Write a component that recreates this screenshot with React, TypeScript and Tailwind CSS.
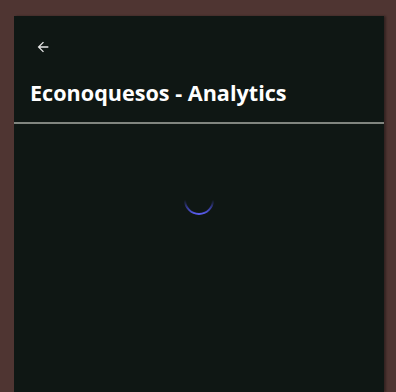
export default function App() {
    return (
        <div className="min-h-[392px] bg-[#4f3532] pl-[14px] pt-[16px]" style={{ fontFamily: "'Open Sans', 'Noto Sans', sans-serif" }}>
            <div className="w-[370px] min-h-[376px] bg-[#0f1714] shadow-[2px_0_2px_rgba(0,0,0,0.35)]">
                <div className="px-4 pt-[23px] border-b-2 border-[#80857f] h-[108px]">
                    <button className="flex items-center justify-center w-4 h-4 ml-[5px]">
                        <svg viewBox="0 0 24 24" width="16" height="16" fill="#e6e6e6">
                            <path d="M20 11H7.83l5.59-5.59L12 4l-8 8 8 8 1.41-1.41L7.83 13H20v-2z" />
                        </svg>
                    </button>
                    <h1 className="mt-[23px] text-[21.6px] leading-[30px] font-bold text-white">
                        Econoquesos - Analytics
                    </h1>
                </div>
                <div className="flex justify-center pt-[60px]">
                    <svg width="32" height="32" viewBox="0 0 32 32">
                        <defs>
                            <linearGradient id="spin" x1="0" y1="16" x2="0" y2="30" gradientUnits="userSpaceOnUse">
                                <stop offset="0" stopColor="#4a4ed8" stopOpacity="0" />
                                <stop offset="0.6" stopColor="#4a4ed8" stopOpacity="0.7" />
                                <stop offset="1" stopColor="#5a5ef0" stopOpacity="1" />
                            </linearGradient>
                        </defs>
                        <path d="M2 16 A14 14 0 0 0 30 16" fill="none" stroke="url(#spin)" strokeWidth="2" />
                    </svg>
                </div>
            </div>
        </div>
    );
}
